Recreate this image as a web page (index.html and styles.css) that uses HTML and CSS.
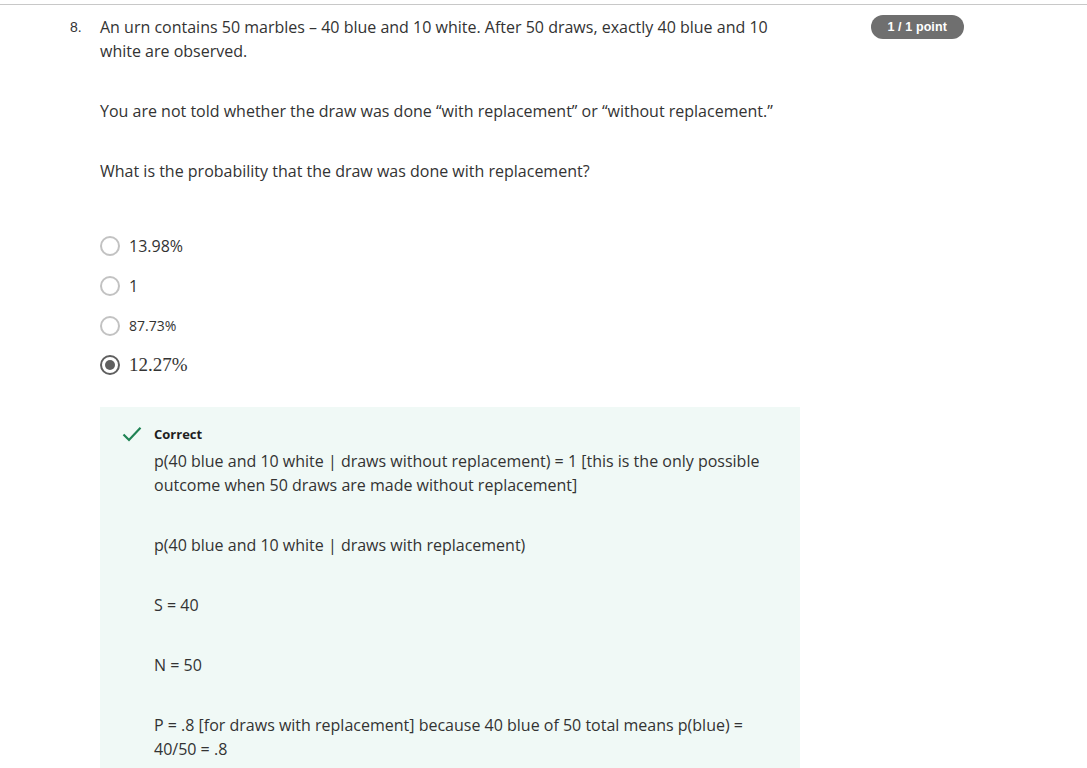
FILE: index.html
```html
<!DOCTYPE html>
<html lang="en">
<head>
<meta charset="utf-8">
<title>Question 8</title>
<link rel="stylesheet" href="styles.css">
</head>
<body>
<div class="page">
  <div class="question">
    <div class="qnum">8.</div>
    <div class="qbody">
      <div class="prompt">
        <p>An urn contains 50 marbles – 40 blue and 10 white. After 50 draws, exactly 40 blue and 10 white are observed.</p>
        <p>You are not told whether the draw was done “with replacement” or “without replacement.”</p>
        <p>What is the probability that the draw was done with replacement?</p>
      </div>
      <div class="options">
        <div class="option"><span class="radio"></span><span class="label">13.98%</span></div>
        <div class="option"><span class="radio"></span><span class="label">1</span></div>
        <div class="option"><span class="radio"></span><span class="label small">87.73%</span></div>
        <div class="option"><span class="radio checked"></span><span class="label math">12.27%</span></div>
      </div>
      <div class="feedback">
        <div class="fb-head">
          <svg class="check" width="20" height="16" viewBox="0 0 20 16"><path d="M1.5 8.5 L7 14 L18.5 1.8" fill="none" stroke="#1f8354" stroke-width="2.2"/></svg>
          <span class="fb-title">Correct</span>
        </div>
        <div class="fb-text">
          <p>p(40 blue and 10 white | draws without replacement) = 1 [this is the only possible outcome when 50 draws are made without replacement]</p>
          <p>p(40 blue and 10 white | draws with replacement)</p>
          <p>S = 40</p>
          <p>N = 50</p>
          <p>P = .8 [for draws with replacement] because 40 blue of 50 total means p(blue) = 40/50 = .8</p>
        </div>
      </div>
    </div>
    <div class="score"><span class="badge">1 / 1 point</span></div>
  </div>
</div>
</body>
</html>
```
FILE: styles.css
```css
html, body {
  margin: 0;
  padding: 0;
  background: #fff;
}
body {
  font-family: "Open Sans", "Liberation Sans", sans-serif;
  color: #333;
}
.page {
  padding-top: 4px;
}
.question {
  border-top: 1px solid #c8c8c8;
  display: flex;
  align-items: flex-start;
  padding: 10px 0 0 70px;
}
.qnum {
  width: 30px;
  flex: none;
  font-family: "Liberation Sans", Arial, sans-serif;
  font-size: 14px;
  line-height: 24px;
  color: #333;
}
.qbody {
  width: 700px;
  flex: none;
}
.prompt p {
  margin: 0 0 36px;
  font-size: 16px;
  line-height: 24px;
}
.prompt p:last-child {
  margin-bottom: 42px;
}
.options {
  display: flex;
  flex-direction: column;
}
.option {
  display: flex;
  align-items: center;
  height: 41px;
}
.option:nth-child(2) { height: 40px; }
.option:nth-child(3) { height: 39px; }
.option:nth-child(4) { height: 39px; }
.radio {
  width: 16px;
  height: 16px;
  border: 2px solid #c2c2c2;
  border-radius: 50%;
  box-sizing: content-box;
  flex: none;
  margin-right: 9px;
  position: relative;
}
.radio.checked {
  border-color: #5f5f5f;
}
.radio.checked::after {
  content: "";
  position: absolute;
  left: 3px;
  top: 3px;
  width: 10px;
  height: 10px;
  border-radius: 50%;
  background: #5f5f5f;
}
.label {
  font-size: 16px;
  line-height: 24px;
}
.label.small {
  font-size: 14px;
}
.label.math {
  font-family: "Liberation Serif", "DejaVu Serif", serif;
  font-size: 19px;
}
.feedback {
  margin-top: 23px;
  background: #f0f9f6;
  padding: 17px 24px 40px 22px;
}
.fb-head {
  display: flex;
  align-items: center;
  height: 20px;
}
.check {
  flex: none;
  margin-right: 12px;
}
.fb-title {
  font-size: 13px;
  font-weight: 700;
  line-height: 20px;
  color: #1f1f1f;
}
.fb-text {
  margin-top: 5px;
  padding-left: 32px;
}
.fb-text p {
  margin: 0 0 36px;
  font-size: 16px;
  line-height: 24px;
}
.score {
  margin-left: 71px;
  margin-top: -1px;
}
.badge {
  display: inline-block;
  height: 24px;
  line-height: 24px;
  padding: 0 17px 0 16.5px;
  border-radius: 12px;
  background: #6f6f6f;
  color: #fff;
  font-family: "Liberation Sans", Arial, sans-serif;
  font-weight: 700;
  font-size: 12.5px;
  letter-spacing: 0.1px;
}
```
